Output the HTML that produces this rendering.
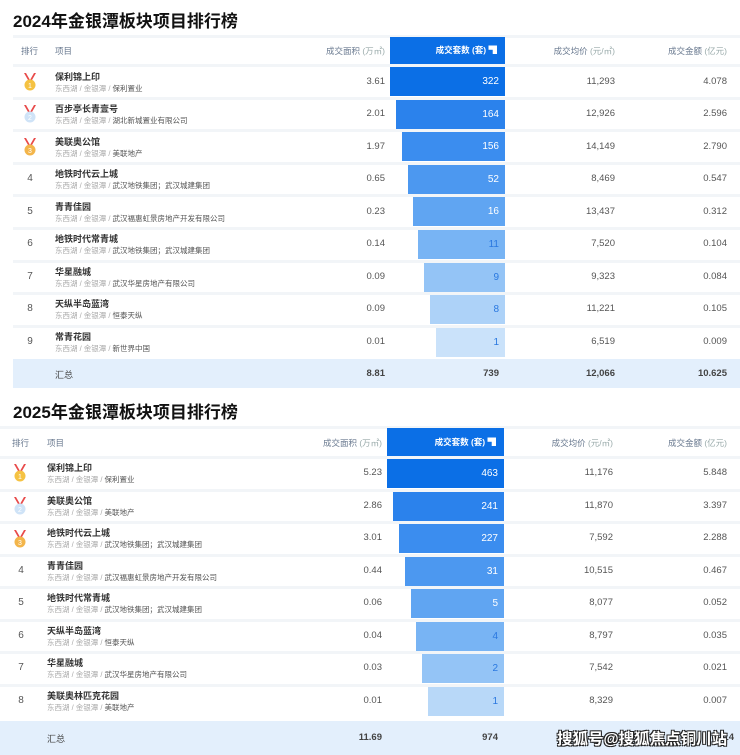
<!DOCTYPE html>
<html><head><meta charset="utf-8"><style>
*{margin:0;padding:0;box-sizing:border-box}
body{width:740px;height:755px;background:#fff;position:relative;overflow:hidden;font-family:"Liberation Sans","Noto Sans CJK SC",sans-serif;color:#444}
.a{position:absolute;white-space:nowrap}
.t{font-size:17px;font-weight:bold;color:#111}
.h{font-size:8.5px;color:#6a7a90}
.hs{color:#9aa}
.n{font-size:9px;font-weight:bold;color:#333}
.s{font-size:7.5px;color:#aaa}
.s b{font-weight:normal;color:#555}
.v{font-size:9.5px;color:#555;text-align:right}
.r{font-size:10px;color:#555;text-align:center;width:20px}
.line{position:absolute;height:3px;background:#f2f5f8}
.bar{position:absolute;height:29px;font-size:10px;text-align:right;padding-right:6px;line-height:29px;color:#fff}
.sum{position:absolute;background:#e3effc}
.sv{font-size:9.5px;font-weight:bold;color:#444;text-align:right}
.hb{position:absolute;background:#0b6fe6;color:#fff;font-size:8.5px;text-align:right;padding-right:8px;font-weight:bold}
</style></head><body>

<div class="a t" style="left:13px;top:7px">2024年金银潭板块项目排行榜</div>
<div class="line" style="left:13px;top:35px;width:727px"></div>
<div class="a h" style="left:21px;top:45px">排行</div>
<div class="a h" style="left:55px;top:45px">项目</div>
<div class="a h" style="left:300px;top:45px;width:85px;text-align:right">成交面积 <span class="hs">(万㎡)</span></div>
<div class="hb" style="left:390px;top:37px;width:115px;height:27px;line-height:27px">成交套数 (套) ▜</div>
<div class="a h" style="left:520px;top:45px;width:95px;text-align:right">成交均价 <span class="hs">(元/㎡)</span></div>
<div class="a h" style="left:640px;top:45px;width:87px;text-align:right">成交金额 <span class="hs">(亿元)</span></div>

<svg width="0" height="0" style="position:absolute"><defs>
<g id="m"><path d="M2 0 L6 7 L8 7 L4 0Z M14 0 L10 7 L8 7 L12 0Z" fill="#e84a4a"/></g></defs></svg>

<!-- table 1 rows -->
<div class="line" style="left:13px;top:64px;width:727px"></div>
<svg class="a" style="left:22px;top:73px" width="16" height="18"><use href="#m"/><circle cx="8" cy="12" r="5.5" fill="#f5c242"/><text x="8" y="15" font-size="7" fill="#fff" text-anchor="middle">1</text></svg>
<div class="a n" style="left:55px;top:70px">保利锦上印</div><div class="a s" style="left:55px;top:83px">东西湖 / 金银潭 / <b>保利置业</b></div>
<div class="a v" style="left:300px;top:76px;width:85px">3.61</div>
<div class="bar" style="left:390px;top:67px;width:115px;background:#0b6fe6">322</div>
<div class="a v" style="left:520px;top:76px;width:95px">11,293</div><div class="a v" style="left:640px;top:76px;width:87px">4.078</div>

<div class="line" style="left:13px;top:97px;width:727px"></div>
<svg class="a" style="left:22px;top:105px" width="16" height="18"><use href="#m"/><circle cx="8" cy="12" r="5.5" fill="#cfe3f7"/><text x="8" y="15" font-size="7" fill="#fff" text-anchor="middle">2</text></svg>
<div class="a n" style="left:55px;top:102px">百步亭长青壹号</div><div class="a s" style="left:55px;top:115px">东西湖 / 金银潭 / <b>湖北新城置业有限公司</b></div>
<div class="a v" style="left:300px;top:108px;width:85px">2.01</div>
<div class="bar" style="left:396px;top:100px;width:109px;background:#2b82ec">164</div>
<div class="a v" style="left:520px;top:108px;width:95px">12,926</div><div class="a v" style="left:640px;top:108px;width:87px">2.596</div>

<div class="line" style="left:13px;top:129px;width:727px"></div>
<svg class="a" style="left:22px;top:138px" width="16" height="18"><use href="#m"/><circle cx="8" cy="12" r="5.5" fill="#f3b54a"/><text x="8" y="15" font-size="7" fill="#fff" text-anchor="middle">3</text></svg>
<div class="a n" style="left:55px;top:135px">美联奥公馆</div><div class="a s" style="left:55px;top:148px">东西湖 / 金银潭 / <b>美联地产</b></div>
<div class="a v" style="left:300px;top:141px;width:85px">1.97</div>
<div class="bar" style="left:402px;top:132px;width:103px;background:#3b8def">156</div>
<div class="a v" style="left:520px;top:141px;width:95px">14,149</div><div class="a v" style="left:640px;top:141px;width:87px">2.790</div>

<div class="line" style="left:13px;top:162px;width:727px"></div>
<div class="a r" style="left:20px;top:173px">4</div>
<div class="a n" style="left:55px;top:167px">地铁时代云上城</div><div class="a s" style="left:55px;top:180px">东西湖 / 金银潭 / <b>武汉地铁集团；武汉城建集团</b></div>
<div class="a v" style="left:300px;top:173px;width:85px">0.65</div>
<div class="bar" style="left:408px;top:165px;width:97px;background:#4c98f0">52</div>
<div class="a v" style="left:520px;top:173px;width:95px">8,469</div><div class="a v" style="left:640px;top:173px;width:87px">0.547</div>

<div class="line" style="left:13px;top:194px;width:727px"></div>
<div class="a r" style="left:20px;top:206px">5</div>
<div class="a n" style="left:55px;top:200px">青青佳园</div><div class="a s" style="left:55px;top:213px">东西湖 / 金银潭 / <b>武汉福惠虹景房地产开发有限公司</b></div>
<div class="a v" style="left:300px;top:206px;width:85px">0.23</div>
<div class="bar" style="left:413px;top:197px;width:92px;background:#60a5f2">16</div>
<div class="a v" style="left:520px;top:206px;width:95px">13,437</div><div class="a v" style="left:640px;top:206px;width:87px">0.312</div>

<div class="line" style="left:13px;top:227px;width:727px"></div>
<div class="a r" style="left:20px;top:238px">6</div>
<div class="a n" style="left:55px;top:232px">地铁时代常青城</div><div class="a s" style="left:55px;top:245px">东西湖 / 金银潭 / <b>武汉地铁集团；武汉城建集团</b></div>
<div class="a v" style="left:300px;top:238px;width:85px">0.14</div>
<div class="bar" style="left:418px;top:230px;width:87px;background:#78b4f4;color:#2a78e0">11</div>
<div class="a v" style="left:520px;top:238px;width:95px">7,520</div><div class="a v" style="left:640px;top:238px;width:87px">0.104</div>

<div class="line" style="left:13px;top:260px;width:727px"></div>
<div class="a r" style="left:20px;top:271px">7</div>
<div class="a n" style="left:55px;top:265px">华星融城</div><div class="a s" style="left:55px;top:278px">东西湖 / 金银潭 / <b>武汉华星房地产有限公司</b></div>
<div class="a v" style="left:300px;top:271px;width:85px">0.09</div>
<div class="bar" style="left:424px;top:263px;width:81px;background:#94c4f6;color:#2a78e0">9</div>
<div class="a v" style="left:520px;top:271px;width:95px">9,323</div><div class="a v" style="left:640px;top:271px;width:87px">0.084</div>

<div class="line" style="left:13px;top:292px;width:727px"></div>
<div class="a r" style="left:20px;top:303px">8</div>
<div class="a n" style="left:55px;top:297px">天纵半岛蓝湾</div><div class="a s" style="left:55px;top:310px">东西湖 / 金银潭 / <b>恒泰天纵</b></div>
<div class="a v" style="left:300px;top:303px;width:85px">0.09</div>
<div class="bar" style="left:430px;top:295px;width:75px;background:#add2f8;color:#2a78e0">8</div>
<div class="a v" style="left:520px;top:303px;width:95px">11,221</div><div class="a v" style="left:640px;top:303px;width:87px">0.105</div>

<div class="line" style="left:13px;top:325px;width:727px"></div>
<div class="a r" style="left:20px;top:336px">9</div>
<div class="a n" style="left:55px;top:330px">常青花园</div><div class="a s" style="left:55px;top:343px">东西湖 / 金银潭 / <b>新世界中国</b></div>
<div class="a v" style="left:300px;top:336px;width:85px">0.01</div>
<div class="bar" style="left:436px;top:328px;width:69px;background:#cae2fa;color:#2a78e0">1</div>
<div class="a v" style="left:520px;top:336px;width:95px">6,519</div><div class="a v" style="left:640px;top:336px;width:87px">0.009</div>

<div class="sum" style="left:13px;top:359px;width:727px;height:29px"></div>
<div class="a n" style="left:55px;top:368px;font-weight:normal;color:#444">汇总</div>
<div class="a sv" style="left:300px;top:368px;width:85px">8.81</div>
<div class="a sv" style="left:390px;top:368px;width:109px">739</div>
<div class="a sv" style="left:520px;top:368px;width:95px">12,066</div>
<div class="a sv" style="left:640px;top:368px;width:87px">10.625</div>

<!-- table 2 -->
<div class="a t" style="left:13px;top:398px">2025年金银潭板块项目排行榜</div>
<div class="line" style="left:0;top:426px;width:740px"></div>
<div class="a h" style="left:12px;top:437px">排行</div>
<div class="a h" style="left:47px;top:437px">项目</div>
<div class="a h" style="left:297px;top:437px;width:85px;text-align:right">成交面积 <span class="hs">(万㎡)</span></div>
<div class="hb" style="left:387px;top:428px;width:117px;height:28px;line-height:28px">成交套数 (套) ▜</div>
<div class="a h" style="left:518px;top:437px;width:95px;text-align:right">成交均价 <span class="hs">(元/㎡)</span></div>
<div class="a h" style="left:640px;top:437px;width:87px;text-align:right">成交金额 <span class="hs">(亿元)</span></div>

<div class="line" style="left:0;top:456px;width:740px"></div>
<svg class="a" style="left:12px;top:464px" width="16" height="18"><use href="#m"/><circle cx="8" cy="12" r="5.5" fill="#f5c242"/><text x="8" y="15" font-size="7" fill="#fff" text-anchor="middle">1</text></svg>
<div class="a n" style="left:47px;top:461px">保利锦上印</div><div class="a s" style="left:47px;top:474px">东西湖 / 金银潭 / <b>保利置业</b></div>
<div class="a v" style="left:297px;top:467px;width:85px">5.23</div>
<div class="bar" style="left:387px;top:459px;width:117px;background:#0b6fe6">463</div>
<div class="a v" style="left:518px;top:467px;width:95px">11,176</div><div class="a v" style="left:640px;top:467px;width:87px">5.848</div>

<div class="line" style="left:0;top:489px;width:740px"></div>
<svg class="a" style="left:12px;top:497px" width="16" height="18"><use href="#m"/><circle cx="8" cy="12" r="5.5" fill="#cfe3f7"/><text x="8" y="15" font-size="7" fill="#fff" text-anchor="middle">2</text></svg>
<div class="a n" style="left:47px;top:494px">美联奥公馆</div><div class="a s" style="left:47px;top:507px">东西湖 / 金银潭 / <b>美联地产</b></div>
<div class="a v" style="left:297px;top:500px;width:85px">2.86</div>
<div class="bar" style="left:393px;top:492px;width:111px;background:#2b82ec">241</div>
<div class="a v" style="left:518px;top:500px;width:95px">11,870</div><div class="a v" style="left:640px;top:500px;width:87px">3.397</div>

<div class="line" style="left:0;top:521px;width:740px"></div>
<svg class="a" style="left:12px;top:530px" width="16" height="18"><use href="#m"/><circle cx="8" cy="12" r="5.5" fill="#f3b54a"/><text x="8" y="15" font-size="7" fill="#fff" text-anchor="middle">3</text></svg>
<div class="a n" style="left:47px;top:526px">地铁时代云上城</div><div class="a s" style="left:47px;top:539px">东西湖 / 金银潭 / <b>武汉地铁集团；武汉城建集团</b></div>
<div class="a v" style="left:297px;top:532px;width:85px">3.01</div>
<div class="bar" style="left:399px;top:524px;width:105px;background:#3b8def">227</div>
<div class="a v" style="left:518px;top:532px;width:95px">7,592</div><div class="a v" style="left:640px;top:532px;width:87px">2.288</div>

<div class="line" style="left:0;top:554px;width:740px"></div>
<div class="a r" style="left:11px;top:565px">4</div>
<div class="a n" style="left:47px;top:559px">青青佳园</div><div class="a s" style="left:47px;top:572px">东西湖 / 金银潭 / <b>武汉福惠虹景房地产开发有限公司</b></div>
<div class="a v" style="left:297px;top:565px;width:85px">0.44</div>
<div class="bar" style="left:405px;top:557px;width:99px;background:#4c98f0">31</div>
<div class="a v" style="left:518px;top:565px;width:95px">10,515</div><div class="a v" style="left:640px;top:565px;width:87px">0.467</div>

<div class="line" style="left:0;top:586px;width:740px"></div>
<div class="a r" style="left:11px;top:597px">5</div>
<div class="a n" style="left:47px;top:591px">地铁时代常青城</div><div class="a s" style="left:47px;top:604px">东西湖 / 金银潭 / <b>武汉地铁集团；武汉城建集团</b></div>
<div class="a v" style="left:297px;top:597px;width:85px">0.06</div>
<div class="bar" style="left:411px;top:589px;width:93px;background:#60a5f2">5</div>
<div class="a v" style="left:518px;top:597px;width:95px">8,077</div><div class="a v" style="left:640px;top:597px;width:87px">0.052</div>

<div class="line" style="left:0;top:619px;width:740px"></div>
<div class="a r" style="left:11px;top:630px">6</div>
<div class="a n" style="left:47px;top:624px">天纵半岛蓝湾</div><div class="a s" style="left:47px;top:637px">东西湖 / 金银潭 / <b>恒泰天纵</b></div>
<div class="a v" style="left:297px;top:630px;width:85px">0.04</div>
<div class="bar" style="left:416px;top:622px;width:88px;background:#78b4f4;color:#2a78e0">4</div>
<div class="a v" style="left:518px;top:630px;width:95px">8,797</div><div class="a v" style="left:640px;top:630px;width:87px">0.035</div>

<div class="line" style="left:0;top:651px;width:740px"></div>
<div class="a r" style="left:11px;top:662px">7</div>
<div class="a n" style="left:47px;top:656px">华星融城</div><div class="a s" style="left:47px;top:669px">东西湖 / 金银潭 / <b>武汉华星房地产有限公司</b></div>
<div class="a v" style="left:297px;top:662px;width:85px">0.03</div>
<div class="bar" style="left:422px;top:654px;width:82px;background:#94c4f6;color:#2a78e0">2</div>
<div class="a v" style="left:518px;top:662px;width:95px">7,542</div><div class="a v" style="left:640px;top:662px;width:87px">0.021</div>

<div class="line" style="left:0;top:684px;width:740px"></div>
<div class="a r" style="left:11px;top:695px">8</div>
<div class="a n" style="left:47px;top:689px">美联奥林匹克花园</div><div class="a s" style="left:47px;top:702px">东西湖 / 金银潭 / <b>美联地产</b></div>
<div class="a v" style="left:297px;top:695px;width:85px">0.01</div>
<div class="bar" style="left:428px;top:687px;width:76px;background:#b8d8f8;color:#2a78e0">1</div>
<div class="a v" style="left:518px;top:695px;width:95px">8,329</div><div class="a v" style="left:640px;top:695px;width:87px">0.007</div>

<div class="sum" style="left:0;top:721px;width:740px;height:34px"></div>
<div class="a n" style="left:47px;top:732px;font-weight:normal;color:#444">汇总</div>
<div class="a sv" style="left:297px;top:732px;width:85px">11.69</div>
<div class="a sv" style="left:387px;top:732px;width:111px">974</div>
<div class="a sv" style="left:640px;top:732px;width:94px">14</div>
<div class="a" style="left:557px;top:727px;font-size:15.5px;font-weight:bold;color:#fff;text-shadow:1px 1px 0 #222,-1px -1px 0 #222,1px -1px 0 #222,-1px 1px 0 #222">搜狐号@搜狐焦点铜川站</div>

</body></html>
